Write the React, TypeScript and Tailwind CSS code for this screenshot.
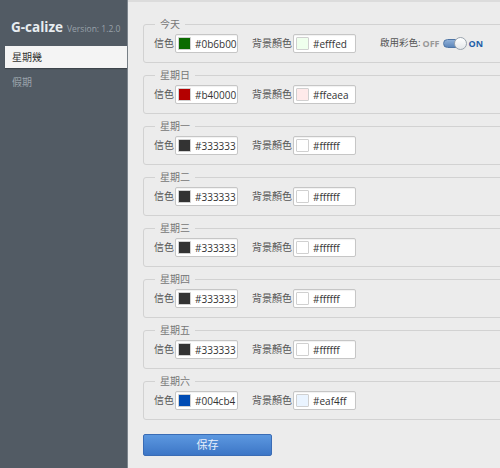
import { useState } from "react";

interface DayColor {
  name: string;
  fg: string;
  bg: string;
}

const days: DayColor[] = [
  { name: "今天", fg: "#0b6b00", bg: "#efffed" },
  { name: "星期日", fg: "#b40000", bg: "#ffeaea" },
  { name: "星期一", fg: "#333333", bg: "#ffffff" },
  { name: "星期二", fg: "#333333", bg: "#ffffff" },
  { name: "星期三", fg: "#333333", bg: "#ffffff" },
  { name: "星期四", fg: "#333333", bg: "#ffffff" },
  { name: "星期五", fg: "#333333", bg: "#ffffff" },
  { name: "星期六", fg: "#004cb4", bg: "#eaf4ff" },
];

function ColorInput({ value }: { value: string }) {
  return (
    <div className="flex h-[19px] w-[63px] shrink-0 items-center gap-[4px] overflow-hidden rounded-[2px] border border-[#c6c6c6] bg-white pl-[2px] shadow-[inset_0_1px_1px_rgba(0,0,0,0.06)]">
      <div
        className="h-[13px] w-[13px] shrink-0 rounded-[1px] border border-[#d0d0d0]"
        style={{ backgroundColor: value }}
      />
      <span className="whitespace-nowrap text-[10px] leading-none text-[#333]">{value}</span>
    </div>
  );
}

function Toggle() {
  const [on, setOn] = useState(true);
  return (
    <div className="ml-[24px] flex items-center text-[9.5px]">
      <span className="text-[#555]">啟用彩色:</span>
      <span className="ml-[2px] text-[9px] font-bold text-[#999]">OFF</span>
      <button
        onClick={() => setOn(!on)}
        className="relative ml-[3px] flex h-[13px] w-[24px] items-center"
      >
        <span className="h-[9px] w-[22px] rounded-full border border-[#4f76a6] bg-gradient-to-b from-[#8fb0d8] to-[#5d86ba]" />
        <span className="absolute right-0 top-0 h-[13px] w-[13px] rounded-full border border-[#9aa4ae] bg-gradient-to-b from-white to-[#e4e7ea]" />
      </button>
      <span className="ml-[2px] text-[9px] font-bold text-[#1f5fa8]">ON</span>
    </div>
  );
}

function DayFieldset({ day, withToggle }: { day: DayColor; withToggle?: boolean }) {
  return (
    <fieldset className="mb-[6px] w-[380px] rounded-[3px] border border-[#d2d2d2] pb-[9px] pl-[10px] pt-[4px]">
      <legend className="ml-[1px] px-[5px] text-[10px] leading-[12px] text-[#777]">{day.name}</legend>
      <div className="flex items-center">
        <span className="mr-[1px] text-[10px] text-[#555]">信色</span>
        <ColorInput value={day.fg} />
        <span className="ml-[14px] mr-[1px] text-[10px] text-[#555]">背景顏色</span>
        <ColorInput value={day.bg} />
        {withToggle && <Toggle />}
      </div>
    </fieldset>
  );
}

export default function App() {
  return (
    <div
      className="flex h-[468px] w-[500px] overflow-hidden bg-[#ececec]"
      style={{ fontFamily: '"Open Sans", "Noto Sans CJK TC", sans-serif' }}
    >
      {/* 側欄 */}
      <aside className="flex w-[128px] shrink-0 flex-col border-r border-[#7d858d] bg-[#525b64] pt-[18px]">
        <div className="flex items-baseline pl-[11px]">
          <span className="text-[13.5px] font-bold leading-[18px] text-[#e8edf1]">G-calize</span>
          <span className="ml-[4px] text-[8.5px] text-[#98a1a9]">Version: 1.2.0</span>
        </div>
        <div className="ml-[5px] mt-[10px] flex h-[22px] items-center bg-[#f4f4f4] pl-[7px] text-[10px] text-[#333] shadow-[0_1px_1px_rgba(0,0,0,0.25)]">
          星期幾
        </div>
        <div className="ml-[5px] mt-[3px] flex h-[22px] items-center pl-[7px] text-[10px] text-[#9aa3ab]">
          假期
        </div>
      </aside>

      {/* 主區 */}
      <main className="flex-1 border-t-2 border-[#dcdcdc] pl-[15px] pt-[16px]">
        {days.map((day, i) => (
          <DayFieldset key={day.name} day={day} withToggle={i === 0} />
        ))}
        <button className="mt-[8px] h-[22px] w-[129px] rounded-[2px] border border-[#3a6cb5] bg-gradient-to-b from-[#5c98e0] to-[#3d76c6] text-[11px] text-[#e8f0fb]">
          保存
        </button>
      </main>
    </div>
  );
}
